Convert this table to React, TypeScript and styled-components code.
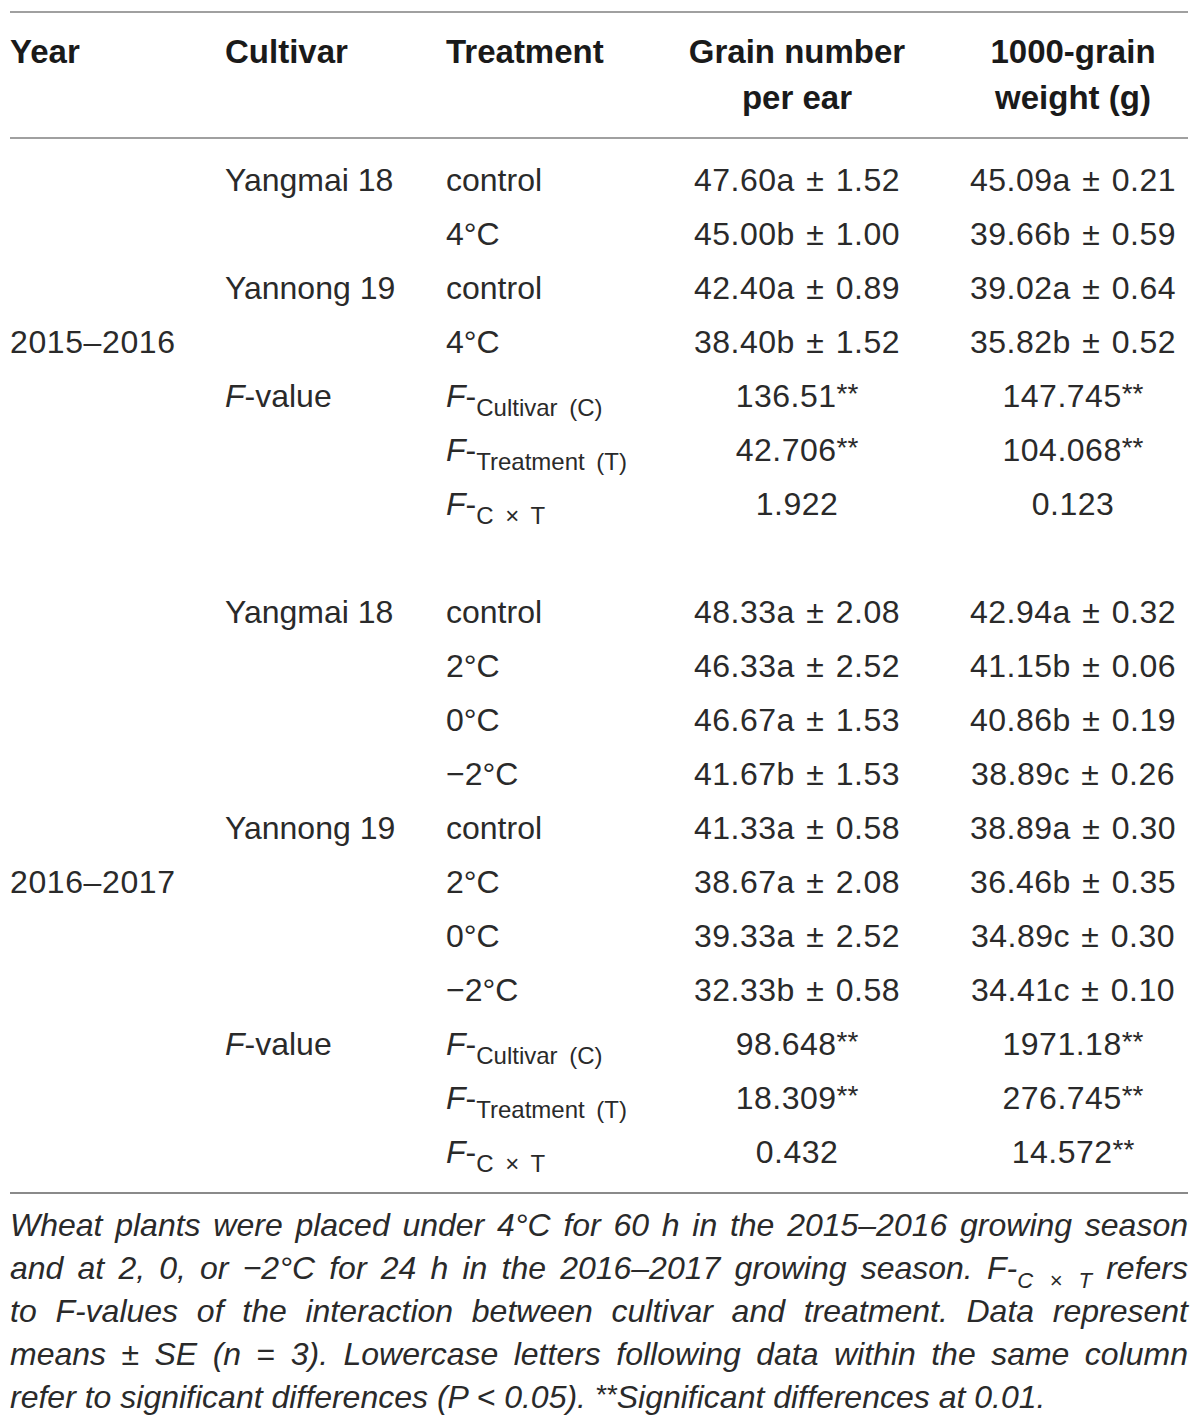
import React from "react";
import styled, { createGlobalStyle } from "styled-components";

const GlobalStyle = createGlobalStyle`
  body {
    margin: 0;
    background: #ffffff;
  }
`;

const columns = "215px 221px 190px 322px 230px";

const Page = styled.div`
  width: 1178px;
  padding: 11px 12px 0 10px;
  font-family: "Liberation Sans", Arial, Helvetica, sans-serif;
  color: #2a2a2a;
`;

const Head = styled.div`
  display: grid;
  grid-template-columns: ${columns};
  padding: 16px 0 16px;
  border-top: 2px solid #a0a0a0;
  border-bottom: 2px solid #a0a0a0;
  font-size: 33px;
  font-weight: bold;
  line-height: 46px;
  color: #1a1a1a;
`;

const HeadCell = styled.div<{ $center?: boolean }>`
  text-align: ${(p) => (p.$center ? "center" : "left")};
  white-space: nowrap;
`;

const Body = styled.div`
  display: grid;
  grid-template-columns: ${columns};
  grid-auto-rows: 54px;
  padding: 14px 0 13px;
  border-bottom: 2px solid #8a8a8a;
  font-size: 32px;
  line-height: 54px;
`;

const YearCell = styled.div<{ $rows: number }>`
  grid-column: 1;
  grid-row: span ${(p) => p.$rows};
  align-self: center;
  letter-spacing: 0.6px;
`;

const CultivarCell = styled.div<{ $rows: number }>`
  grid-column: 2;
  grid-row: span ${(p) => p.$rows};
  align-self: start;
`;

const TreatmentCell = styled.div`
  grid-column: 3;
  white-space: nowrap;
`;

const ValueCell = styled.div<{ $col: number }>`
  grid-column: ${(p) => p.$col};
  text-align: center;
  white-space: nowrap;
  word-spacing: 2px;
  letter-spacing: 0.5px;
`;

const Spacer = styled.div`
  grid-column: 1 / -1;
`;

const Ital = styled.i`
  font-style: italic;
`;

const Sub = styled.span<{ $size?: number }>`
  font-size: ${(p) => p.$size ?? 24}px;
  vertical-align: -9px;
  line-height: 0;
  word-spacing: 5px;
  letter-spacing: 0;
`;

const Stars = styled.span`
  font-size: 28px;
  vertical-align: 4px;
  line-height: 0;
  letter-spacing: 0;
`;

const Footnote = styled.div`
  padding-top: 10px;
  font-size: 32px;
  line-height: 43px;
  font-style: italic;
  color: #2a2a2a;
`;

const FootLine = styled.span<{ $last?: boolean }>`
  display: block;
  white-space: nowrap;
  text-align: ${(p) => (p.$last ? "left" : "justify")};
  text-align-last: ${(p) => (p.$last ? "left" : "justify")};
`;

const Upright = styled.span`
  font-style: normal;
`;

type Cultivar = { name: string; rows: [string, string, string][] };
type FRow = { label: string; grain: string; grainStar: boolean; weight: string; weightStar: boolean };
type Season = { year: string; cultivars: Cultivar[]; f: FRow[] };

const seasons: Season[] = [
  {
    year: "2015–2016",
    cultivars: [
      {
        name: "Yangmai 18",
        rows: [
          ["control", "47.60a ± 1.52", "45.09a ± 0.21"],
          ["4°C", "45.00b ± 1.00", "39.66b ± 0.59"],
        ],
      },
      {
        name: "Yannong 19",
        rows: [
          ["control", "42.40a ± 0.89", "39.02a ± 0.64"],
          ["4°C", "38.40b ± 1.52", "35.82b ± 0.52"],
        ],
      },
    ],
    f: [
      { label: "Cultivar (C)", grain: "136.51", grainStar: true, weight: "147.745", weightStar: true },
      { label: "Treatment (T)", grain: "42.706", grainStar: true, weight: "104.068", weightStar: true },
      { label: "C × T", grain: "1.922", grainStar: false, weight: "0.123", weightStar: false },
    ],
  },
  {
    year: "2016–2017",
    cultivars: [
      {
        name: "Yangmai 18",
        rows: [
          ["control", "48.33a ± 2.08", "42.94a ± 0.32"],
          ["2°C", "46.33a ± 2.52", "41.15b ± 0.06"],
          ["0°C", "46.67a ± 1.53", "40.86b ± 0.19"],
          ["−2°C", "41.67b ± 1.53", "38.89c ± 0.26"],
        ],
      },
      {
        name: "Yannong 19",
        rows: [
          ["control", "41.33a ± 0.58", "38.89a ± 0.30"],
          ["2°C", "38.67a ± 2.08", "36.46b ± 0.35"],
          ["0°C", "39.33a ± 2.52", "34.89c ± 0.30"],
          ["−2°C", "32.33b ± 0.58", "34.41c ± 0.10"],
        ],
      },
    ],
    f: [
      { label: "Cultivar (C)", grain: "98.648", grainStar: true, weight: "1971.18", weightStar: true },
      { label: "Treatment (T)", grain: "18.309", grainStar: true, weight: "276.745", weightStar: true },
      { label: "C × T", grain: "0.432", grainStar: false, weight: "14.572", weightStar: true },
    ],
  },
];

function SeasonRows({ season }: { season: Season }) {
  const total =
    season.cultivars.reduce((n, c) => n + c.rows.length, 0) + season.f.length;
  return (
    <>
      <YearCell $rows={total}>{season.year}</YearCell>
      {season.cultivars.map((c) =>
        c.rows.map((r, i) => (
          <React.Fragment key={c.name + r[0]}>
            {i === 0 && <CultivarCell $rows={c.rows.length}>{c.name}</CultivarCell>}
            <TreatmentCell>{r[0]}</TreatmentCell>
            <ValueCell $col={4}>{r[1]}</ValueCell>
            <ValueCell $col={5}>{r[2]}</ValueCell>
          </React.Fragment>
        ))
      )}
      {season.f.map((f, i) => (
        <React.Fragment key={f.label}>
          {i === 0 && (
            <CultivarCell $rows={season.f.length}>
              <Ital>F</Ital>-value
            </CultivarCell>
          )}
          <TreatmentCell>
            <Ital>F</Ital>-<Sub>{f.label}</Sub>
          </TreatmentCell>
          <ValueCell $col={4}>
            {f.grain}
            {f.grainStar && <Stars>**</Stars>}
          </ValueCell>
          <ValueCell $col={5}>
            {f.weight}
            {f.weightStar && <Stars>**</Stars>}
          </ValueCell>
        </React.Fragment>
      ))}
    </>
  );
}

export default function App() {
  return (
    <Page>
      <GlobalStyle />
      <Head>
        <HeadCell>Year</HeadCell>
        <HeadCell>Cultivar</HeadCell>
        <HeadCell>Treatment</HeadCell>
        <HeadCell $center>
          Grain number
          <br />
          per ear
        </HeadCell>
        <HeadCell $center>
          1000-grain
          <br />
          weight (g)
        </HeadCell>
      </Head>
      <Body>
        <SeasonRows season={seasons[0]} />
        <Spacer />
        <SeasonRows season={seasons[1]} />
      </Body>
      <Footnote>
        <FootLine>
          Wheat plants were placed under 4°C for 60 h in the 2015–2016 growing season
        </FootLine>
        <FootLine>
          and at 2, 0, or −2°C for 24 h in the 2016–2017 growing season. F-
          <Sub $size={22}>C × T</Sub> refers
        </FootLine>
        <FootLine>
          to F-values of the interaction between cultivar and treatment. Data represent
        </FootLine>
        <FootLine>
          means <Upright>±</Upright> SE (n <Upright>=</Upright> 3). Lowercase letters following data within the same column
        </FootLine>
        <FootLine $last>
          refer to significant differences (P &lt; 0.05). <Stars>**</Stars>Significant differences at 0.01.
        </FootLine>
      </Footnote>
    </Page>
  );
}
